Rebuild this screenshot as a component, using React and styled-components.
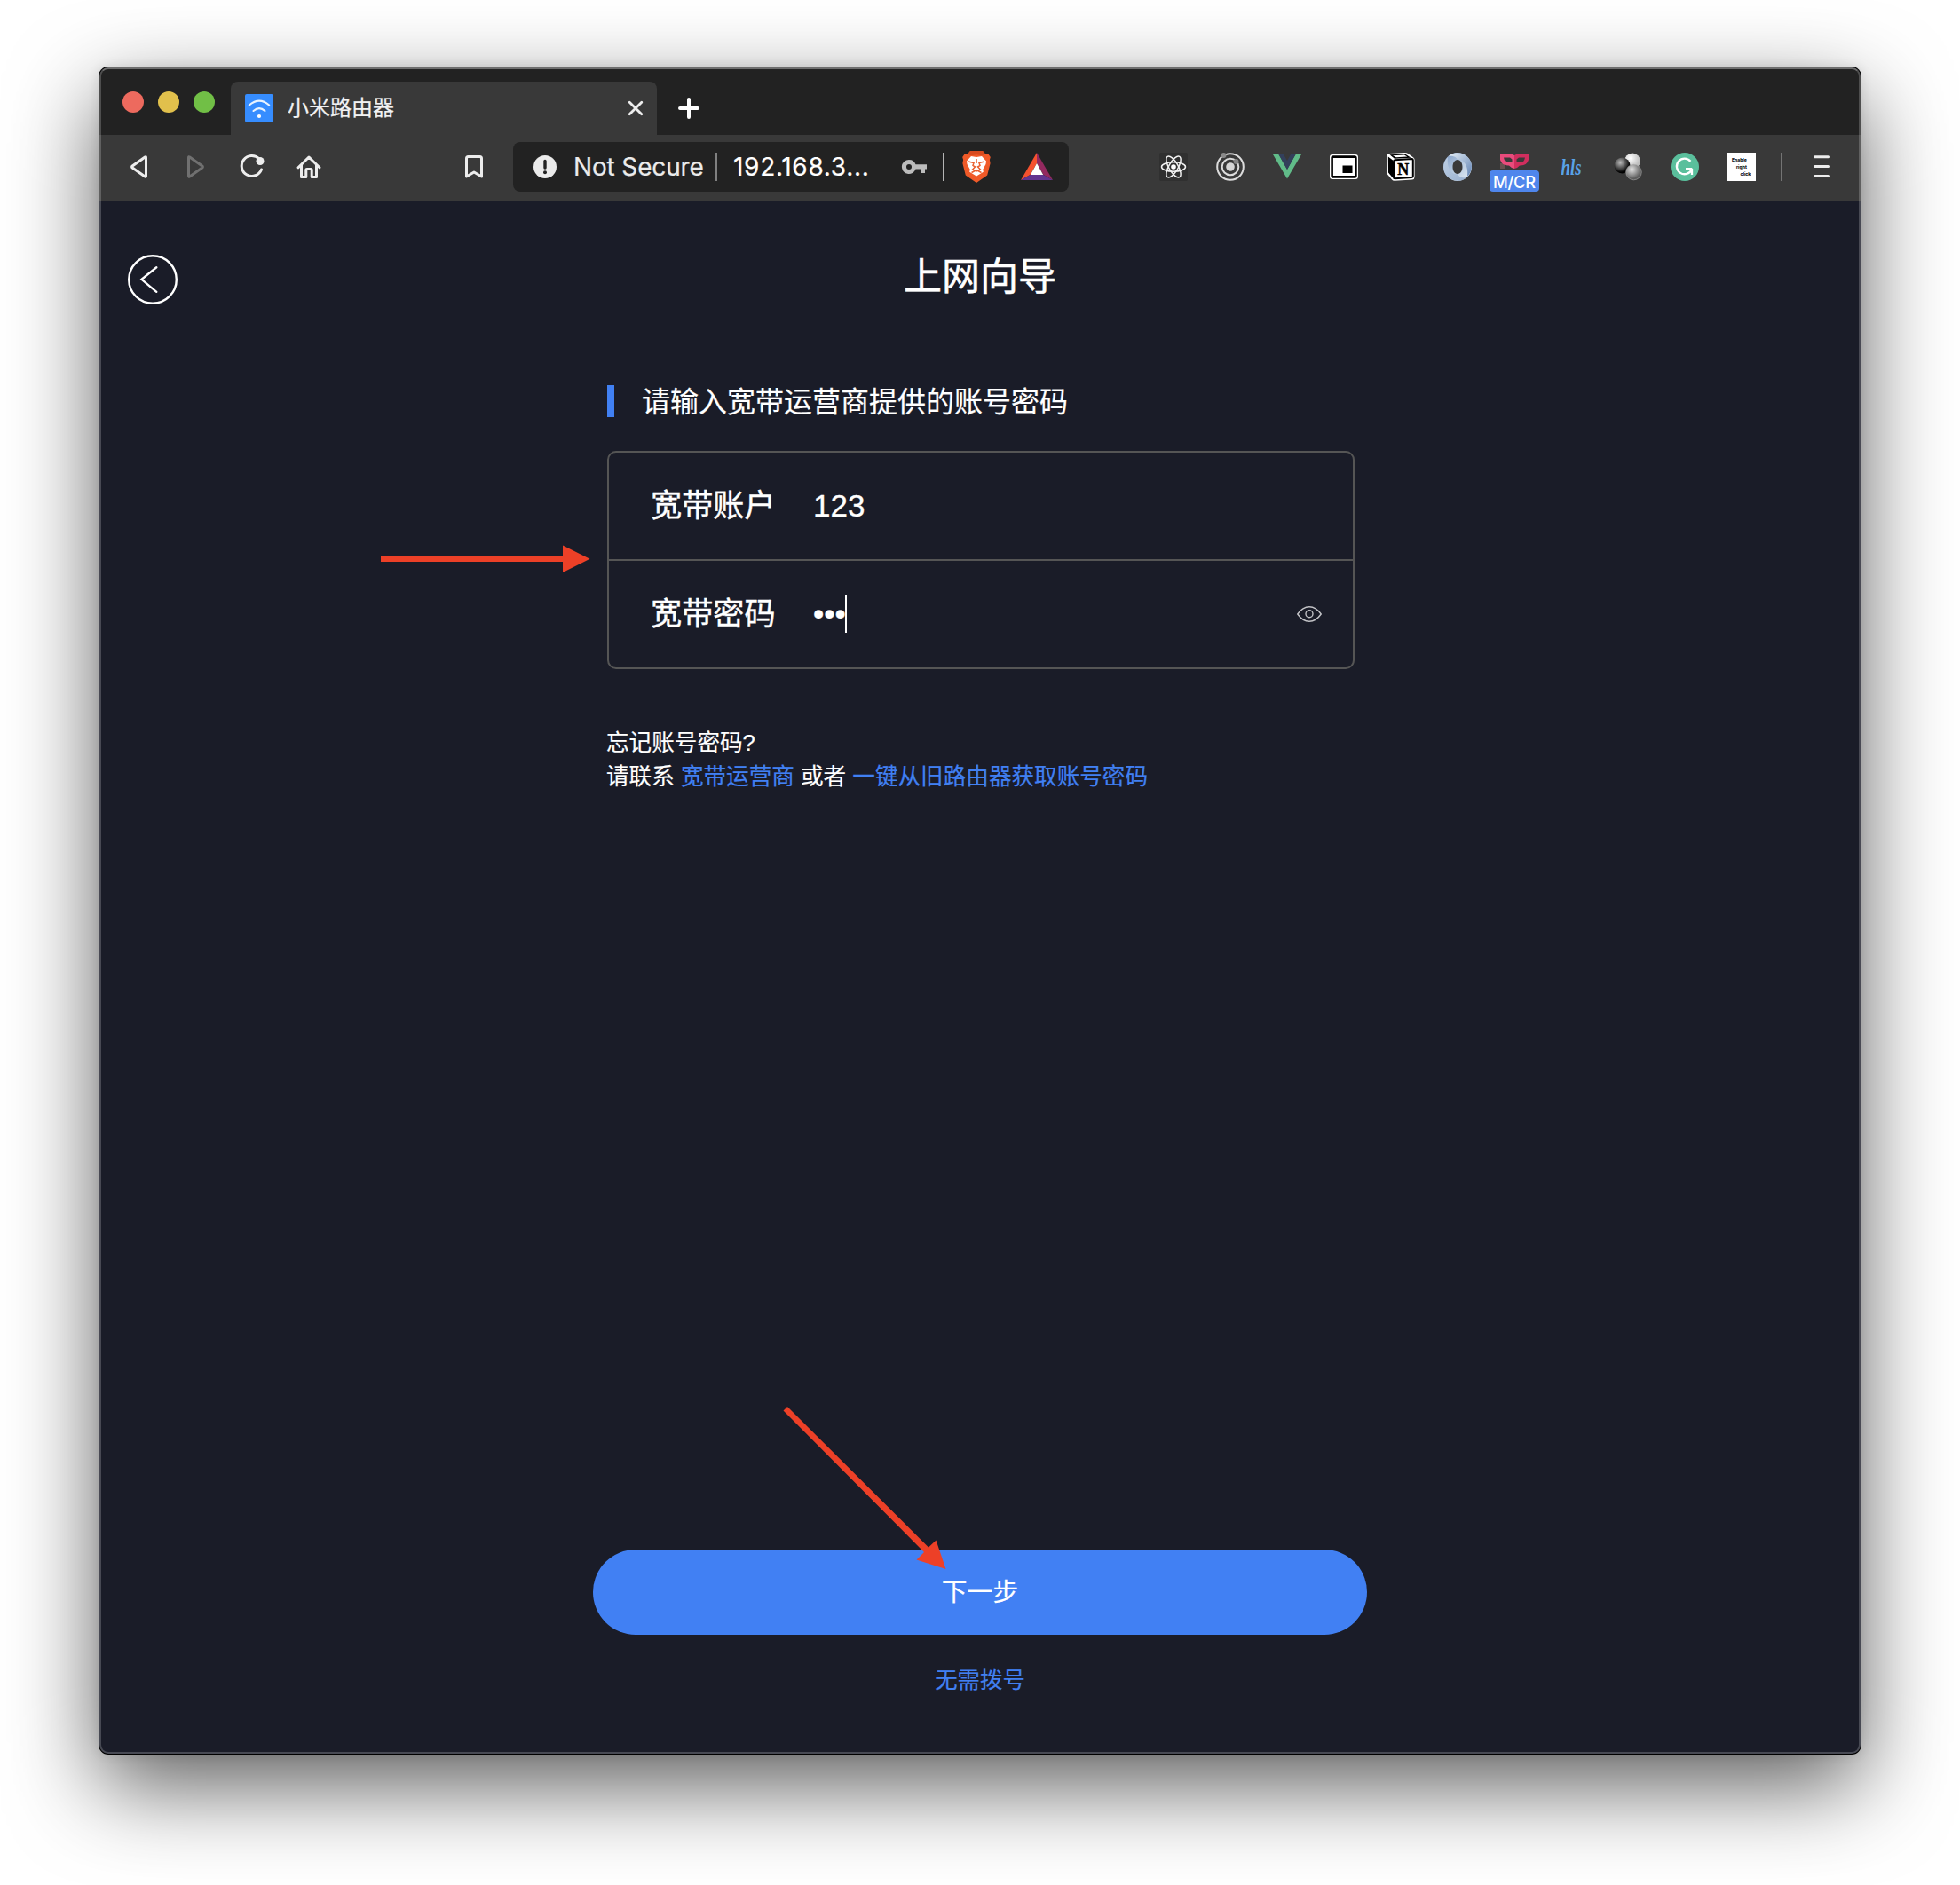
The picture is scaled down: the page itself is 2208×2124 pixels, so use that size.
import React from "react";
import styled, { createGlobalStyle } from "styled-components";

const Global = createGlobalStyle`
  * { box-sizing: border-box; }
  body { margin: 0; background: #fff; }
`;

const cjk = `"Liberation Sans", "Noto Sans CJK SC", sans-serif`;
const ui = `Inter, "Noto Sans CJK SC", sans-serif`;

const Desktop = styled.div`
  width: 2208px;
  height: 2124px;
  padding: 76px 112px 148px;
  overflow: hidden;
  position: relative;
  background: #fff;
`;

const BrowserWindow = styled.div`
  position: relative;
  display: flex;
  flex-direction: column;
  height: 1900px;
  border-radius: 10px;
  background: #1a1c28;
  box-shadow: 0 0 0 1px #000, 0 36px 100px rgba(0, 0, 0, 0.64), 0 0 14px rgba(0, 0, 0, 0.12);
  &::after {
    content: "";
    position: absolute;
    inset: 0;
    border-radius: 10px;
    border: 2px solid rgba(255, 255, 255, 0.2);
    border-top-color: rgba(255, 255, 255, 0.34);
    pointer-events: none;
  }
`;

const TabStrip = styled.div`
  display: flex;
  align-items: flex-end;
  height: 76px;
  background: #222;
  border-radius: 10px 10px 0 0;
`;

const TrafficLights = styled.div`
  display: flex;
  gap: 16px;
  width: 148px;
  padding: 0 18px 25px 26px;
`;

const Light = styled.span`
  width: 24px;
  height: 24px;
  flex: none;
  border-radius: 50%;
  background: ${(p) => p.$color};
`;

const Tab = styled.div`
  display: flex;
  align-items: center;
  width: 480px;
  height: 60px;
  padding: 0 16px;
  border-radius: 8px 8px 0 0;
  background: #393939;
`;

const TabTitle = styled.span`
  flex: 1;
  margin-left: 16px;
  font: 400 24px/32px ${ui};
  color: #f2f2f2;
  -webkit-text-stroke: 0.2px currentColor;
`;

const NewTab = styled.div`
  display: flex;
  align-items: center;
  height: 60px;
  padding-left: 24px;
`;

const Toolbar = styled.div`
  display: flex;
  align-items: center;
  height: 74px;
  padding: 0 28px 2px;
  background: #393939;
`;

const IconGroup = styled.div`
  display: flex;
  align-items: center;
  gap: 32px;
  margin-left: ${(p) => p.$left || 0}px;
`;

const Slot = styled.div`
  position: relative;
  display: flex;
  width: 32px;
  height: 32px;
  flex: none;
`;

const Icon = styled.svg`
  display: block;
  flex: none;
  margin-left: ${(p) => p.$left || 0}px;
  overflow: visible;
`;

const Badge = styled.span`
  position: absolute;
  left: -12px;
  top: 20px;
  width: 56px;
  height: 24px;
  border-radius: 4px;
  background: #4f86ec;
  color: #fff;
  font: 500 18.3px/27px ${ui};
  letter-spacing: -0.2px;
  text-align: center;
`;

const AddressBar = styled.div`
  display: flex;
  align-items: center;
  width: 626px;
  height: 56px;
  margin-left: 28px;
  padding-left: 22px;
  border-radius: 8px;
  background: #222;
`;

const AddressText = styled.span`
  width: ${(p) => p.$width}px;
  margin-left: ${(p) => p.$left}px;
  font: 400 28px/36px ${ui};
  letter-spacing: ${(p) => p.$spacing || 0}px;
  color: ${(p) => p.$color};
  white-space: nowrap;
  -webkit-text-stroke: 0.2px currentColor;
`;

const Divider = styled.span`
  width: 2px;
  height: 32px;
  flex: none;
  margin-left: ${(p) => p.$left || 0}px;
  background: ${(p) => p.$color};
`;

const Page = styled.main`
  flex: 1;
  display: flex;
  flex-direction: column;
  align-items: center;
  font-family: ${cjk};
  color: #fff;
  -webkit-text-stroke: 0.2px currentColor;
`;

const Header = styled.header`
  display: flex;
  justify-content: space-between;
  width: 100%;
  padding: 54px 32px 0;
`;

const BackButton = styled.button`
  width: 56px;
  height: 56px;
  margin-top: 7px;
  padding: 0;
  border: 0;
  background: none;
`;

const Title = styled.h1`
  margin: 2px 0 0;
  font-size: 43px;
  font-weight: 400;
  line-height: 60px;
  -webkit-text-stroke: 0.5px currentColor;
`;

const Balance = styled.span`
  width: 56px;
`;

const Form = styled.section`
  width: 842px;
  margin: 91px 0 0 2px;
`;

const Prompt = styled.h2`
  display: flex;
  align-items: center;
  height: 36px;
  margin: 0;
  padding: 2px 0 0 31px;
  border-left: 8px solid #4180f3;
  font-size: 32px;
  font-weight: 400;
  line-height: 36px;
`;

const Fields = styled.div`
  margin-top: 38px;
  height: 246px;
  border: 2px solid #555;
  border-radius: 10px;
`;

const Field = styled.label`
  display: flex;
  align-items: center;
  height: ${(p) => (p.$divided ? 122 : 120)}px;
  padding: 0 35px 0 47px;
  border-bottom: ${(p) => (p.$divided ? "2px solid #555" : "0")};
  font-size: 35.2px;
  line-height: 42px;
`;

const FieldName = styled.span`
  width: 183px;
  -webkit-text-stroke: 0.4px currentColor;
`;

const Value = styled.span`
  display: flex;
  flex: 1;
  margin-top: -1px;
  font-size: 35px;
  -webkit-text-stroke: 0.3px currentColor;
`;

const Caret = styled.span`
  width: 2px;
  height: 42px;
  margin-left: -1px;
  background: #fff;
`;

const Help = styled.p`
  margin: 64px 0 0 -1px;
  font-size: 25.6px;
  line-height: 38px;
  white-space: nowrap;
`;

const Link = styled.a`
  color: #4180f3;
`;

const Actions = styled.footer`
  display: flex;
  flex-direction: column;
  align-items: center;
  margin-top: auto;
  padding-bottom: 64px;
`;

const NextButton = styled.button`
  width: 872px;
  height: 96px;
  padding: 0;
  border: 0;
  border-radius: 48px;
  background: #4180f3;
  color: #fff;
  font: 400 28.8px/40px ${cjk};
  -webkit-text-stroke: 0.2px currentColor;
`;

const Skip = styled(Link)`
  margin-top: 32px;
  font-size: 25.4px;
  line-height: 38px;
`;

const Pointers = styled.svg`
  position: absolute;
  left: 0;
  top: 0;
  pointer-events: none;
`;

const line = {
  fill: "none",
  stroke: "#ededed",
  strokeWidth: 3,
  strokeLinecap: "round",
  strokeLinejoin: "round",
};

const Glyph = ({ children }) => (
  <Slot>
    <Icon width="32" height="32" viewBox="0 0 32 32">{children}</Icon>
  </Slot>
);

const Favicon = () => (
  <Icon width="32" height="32" viewBox="0 0 32 32">
    <rect width="32" height="32" rx="2" fill="#368dff" />
    <path d="M4.800 12.500Q16 2.800 27.200 12.500M9.500 19Q16 13.400 22.500 19" fill="none" stroke="#e8f3ff" strokeWidth="2.100" strokeLinecap="round" />
    <circle cx="16" cy="25" r="2.100" fill="#fff" />
  </Icon>
);

const BraveIcon = () => (
  <Icon width="32" height="36" viewBox="0 0 32 36" $left={20}>
    <path d="M9 0h14l3 3.400 3-.4 2.800 4-.9 3 .7 4-3.400 13.500L16 36 3.800 27.500 .4 14l.7-4-.9-3L3 3l3 .4z" fill="#f05a28" />
    <path d="M9 0h14l3 3.400-3.500 1.800-6.500-1-6.500 1L6 3.400z" fill="#d84b1f" />
    <path d="M10 6l6 1 6-1 5 5.500-.5 3.500-3.200 5.800.5 3L16 28.500l-7.800-4.700.5-3L5.500 15 5 11.500z" fill="#fff" />
    <path d="M7 12l6 1.500-1 3 2.500 1.500-3 3 4.500 2 4.500-2-3-3 2.500-1.500-1-3 6-1.500M16 9v5M10.500 24.500L16 21.500l5.500 3" fill="none" stroke="#e9602f" strokeWidth="1.500" />
  </Icon>
);

const BatIcon = () => (
  <Icon width="36" height="32" viewBox="0 0 36 32" $left={34}>
    <path d="M18 0v12L10.500 25 0 31z" fill="#f5512f" />
    <path d="M18 0v12l7.500 13L36 31z" fill="#94295f" />
    <path d="M0 31l10.500-6h15L36 31z" fill="#62348f" />
    <path d="M18 12l7.200 13H10.800z" fill="#fff" />
  </Icon>
);

const ReactIcon = () => (
  <Glyph>
    <rect width="32" height="32" rx="2" fill="#303030" />
    <g fill="none" stroke="#f2f2f2" strokeWidth="1.500">
      {[0, 60, 120].map((a) => (
        <ellipse key={a} cx="16" cy="16" rx="13.500" ry="5.200" transform={`rotate(${a} 16 16)`} />
      ))}
    </g>
    <circle cx="16" cy="16" r="2.800" fill="#fff" />
  </Glyph>
);

const OrbitIcon = () => (
  <Glyph>
    <g fill="none" stroke="#dcdcdc" strokeWidth="2">
      <circle cx="16" cy="16" r="14.800" />
      <circle cx="16" cy="16" r="9.300" />
    </g>
    <circle cx="16" cy="16" r="4.800" fill="#d6d6d6" />
    <circle cx="8.500" cy="3" r="3" fill="#8a8a8a" />
    <circle cx="22.500" cy="10" r="3" fill="#858585" />
  </Glyph>
);

const VueIcon = () => (
  <Glyph>
    <path d="M0 2h6.500L16 19l9.500-17H32L16 29.500z" fill="#61bc89" />
    <path d="M6.500 2h5.500l4 7 4-7h5.500L16 19z" fill="#33405b" />
  </Glyph>
);

const PipIcon = () => (
  <Glyph>
    <rect x="0" y="2" width="32" height="28" rx="3" fill="#fff" />
    <rect x="2.600" y="4.600" width="26.800" height="22.800" rx="1.500" fill="#fff" stroke="#000" strokeWidth="2.600" />
    <rect x="14.500" y="14.500" width="11" height="8.500" fill="#000" />
  </Glyph>
);

const NotionIcon = () => (
  <Glyph>
    <path d="M.5 3Q.5 1 3 .9L20.500 0Q23 0 24.500 1.200L30 5.200Q31.600 6.200 31.600 8v19.500Q31.500 30.200 29 30.400L9.500 31.700Q7 31.900 5.800 30.200L1 24.500Q0 23 0 21z" fill="#fff" />
    <path d="M1.800 4.500L7 8.500V28.500L2 22.500zM3.500 2.300L21 1.600l6.500 4.200-18.500 1z" fill="#000" />
    <path d="M7 3.200l13-.7 3.300 2-12.500.7z" fill="#fff" />
    <path d="M9.500 8.300L28.500 7q1.300 0 1.300 1.200v18.300q0 1.500-1.500 1.600L9.500 29.300q-1.500 0-1.500-1.500V9.800q0-1.400 1.500-1.500z" fill="#fff" stroke="#000" strokeWidth="2" />
    <text x="18.700" y="24.500" textAnchor="middle" fontFamily="Liberation Serif, serif" fontWeight="700" fontSize="18" fill="#000" stroke="#000" strokeWidth=".5">N</text>
  </Glyph>
);

const JsonIcon = () => (
  <Glyph>
    <defs>
      <linearGradient id="ringBase" x1="0" y1="0" x2="1" y2="1">
        <stop offset="0" stopColor="#7f9cc6" />
        <stop offset=".5" stopColor="#b5c9e0" />
        <stop offset="1" stopColor="#eaf1f7" />
      </linearGradient>
      <linearGradient id="ringTop" x1="0" y1="0" x2="1" y2="1">
        <stop offset="0" stopColor="#eaf2f8" />
        <stop offset="1" stopColor="#5f82b4" />
      </linearGradient>
    </defs>
    <path fillRule="evenodd" d="M16 0a16 16 0 1 1 0 32 16 16 0 0 1 0-32zM16 8c-3.500 0-5.500 4-5.500 8s2 8 5.500 8 5.500-4 5.500-8-2-8-5.500-8z" fill="url(#ringBase)" />
    <path d="M14 .2C22-.5 31.500 5 32 15c0 5-2 9-5 12 1-8-1-14-5-17.500C20 8 18 7.500 16 8c-1-3.500-6-5-10.500-4Q9.500 .6 14 .2z" fill="url(#ringTop)" />
    <path d="M18 31.800C10 32.500.5 27 0 17c0-5 2-9 5-12-1 8 1 14 5 17.500 2 1.500 4 2 6 1.500 1 3.500 6 5 10.500 4q-4 3.400-8.500 3.800z" fill="url(#ringTop)" opacity=".55" />
  </Glyph>
);

const MaskIcon = () => (
  <Slot>
    <Icon width="32" height="32" viewBox="0 0 32 32">
      <rect x="0" y="12" width="5" height="6" fill="#66504f" />
      <path d="M0 1h12l4 2v15q-4-1-6-3.500Q2 15 0 8z" fill="#e94b7c" />
      <path d="M32 1H20l-4 2v15q4-1 6-3.500Q30 15 32 8z" fill="#d02e5e" />
      <path d="M4 5.500h7l2.500 2v3.500H9Q5 11 4 5.500zM28 5.500h-7l-2.500 2v3.500H23Q27 11 28 5.500z" fill="#393939" />
    </Icon>
    <Badge>M/CR</Badge>
  </Slot>
);

const HlsIcon = () => (
  <Glyph>
    <text x="16" y="25" textAnchor="middle" textLength="23" lengthAdjust="spacingAndGlyphs" fontFamily="Liberation Serif, serif" fontStyle="italic" fontWeight="700" fontSize="25" fill="#5aa3e8">hls</text>
  </Glyph>
);

const BallsIcon = () => (
  <Glyph>
    <defs>
      {[["ballW", "#fff", "#bdbdbd"], ["ballK", "#bbb", "#000"], ["ballG", "#e4e4e4", "#5c5c5c"]].map(([id, a, b]) => (
        <radialGradient key={id} id={id} cx=".38" cy=".32" r=".6">
          <stop offset="0" stopColor={a} />
          <stop offset="1" stopColor={b} />
        </radialGradient>
      ))}
    </defs>
    <circle cx="21" cy="9.500" r="9" fill="url(#ballW)" />
    <circle cx="9.500" cy="14.500" r="9" fill="url(#ballK)" />
    <circle cx="22.500" cy="22" r="8.800" fill="url(#ballG)" stroke="#aaa" strokeWidth=".6" />
  </Glyph>
);

const GrammarlyIcon = () => (
  <Glyph>
    <circle cx="16" cy="16" r="16" fill="#5abf9c" />
    <path d="M22.500 9.800A8.800 8.800 0 1 0 23.800 19M17 18.200h7.300M24 18v7" fill="none" stroke="#fff" strokeWidth="2.300" />
  </Glyph>
);

const RightClickIcon = () => (
  <Glyph>
    <rect width="32" height="32" fill="#fff" />
    <g fontFamily="Inter, sans-serif" fontWeight="800" fontSize="5" fill="#111">
      <text x="5" y="10">Enable</text>
      <text x="10" y="18.300">right</text>
      <text x="14.500" y="26">click</text>
    </g>
  </Glyph>
);

export default function App() {
  return (
    <Desktop>
      <Global />
      <BrowserWindow>
        <TabStrip>
          <TrafficLights>
            <Light $color="#ed6a5e" />
            <Light $color="#e1c04c" />
            <Light $color="#71bf46" />
          </TrafficLights>
          <Tab>
            <Favicon />
            <TabTitle>小米路由器</TabTitle>
            <Icon width="16" height="16" viewBox="0 0 16 16">
              <path d="M1.200 1.200l13.600 13.600M14.800 1.200L1.200 14.800" {...line} strokeWidth={2.8} />
            </Icon>
          </Tab>
          <NewTab>
            <Icon width="24" height="24" viewBox="0 0 24 24">
              <path d="M12 2v20M2 12h20" {...line} stroke="#fff" strokeWidth={4} />
            </Icon>
          </NewTab>
        </TabStrip>

        <Toolbar>
          <IconGroup>
            <Glyph><path d="M24.500 5.500v21q0 1.300-1.200.500L9.200 17q-1.200-1 0-2L23.300 5q1.200-.8 1.200.5z" {...line} /></Glyph>
            <Glyph><path d="M8.500 5.500v21q0 1.300 1.200.500L23.800 17q1.200-1 0-2L9.700 5Q8.500 4.200 8.500 5.500z" {...line} stroke="#707070" /></Glyph>
            <Glyph>
              <path d="M24 7A11.500 11.500 0 1 0 26.500 19" {...line} />
              <circle cx="25" cy="9.500" r="4.500" fill="#ededed" />
            </Glyph>
            <Glyph><path d="M4 16.800L16 5l12 11.800M7.500 14v13.500h5.300v-8q0-1 1-1h4.400q1 0 1 1v8h5.300V14" {...line} /></Glyph>
          </IconGroup>
          <IconGroup $left={154}>
            <Glyph><path d="M7.500 27V6.500q0-2 2-2h13q2 0 2 2V27L16 22z" {...line} /></Glyph>
          </IconGroup>
          <AddressBar>
            <Icon width="28" height="28" viewBox="0 0 28 28">
              <circle cx="14" cy="14" r="13" fill="#ebebeb" />
              <path d="M14 7.500v7.500" stroke="#222" strokeWidth="3.400" strokeLinecap="round" />
              <circle cx="14" cy="20.200" r="2" fill="#222" />
            </Icon>
            <AddressText $left={18} $width={160} $spacing={-0.15} $color="#ebebeb">Not Secure</AddressText>
            <Divider $color="#808080" />
            <AddressText $left={18} $width={190} $spacing={0.7} $color="#fff">192.168.3...</AddressText>
            <Icon width="28" height="16" viewBox="0 0 28 16">
              <path d="M8 0a8 8 0 0 1 7.500 5.300H28v5.200h-2V15h-4.500v-4.500h-6A8 8 0 1 1 8 0zM8 5a3 3 0 1 0 0 6 3 3 0 0 0 0-6z" fill="#bcbcbc" />
            </Icon>
            <Divider $left={18} $color="#b4b4b4" />
            <BraveIcon />
            <BatIcon />
          </AddressBar>
          <IconGroup $left={102}>
            <ReactIcon />
            <OrbitIcon />
            <VueIcon />
            <PipIcon />
            <NotionIcon />
            <JsonIcon />
            <MaskIcon />
            <HlsIcon />
            <BallsIcon />
            <GrammarlyIcon />
            <RightClickIcon />
          </IconGroup>
          <Divider $left={28} $color="#747474" />
          <IconGroup $left={28}>
            <Glyph><path d="M8.500 4.700h15M8.500 15.500h15M8.500 26.500h15" {...line} /></Glyph>
          </IconGroup>
        </Toolbar>

        <Page>
          <Header>
            <BackButton aria-label="返回">
              <Icon width="56" height="56" viewBox="0 0 56 56" fill="none" stroke="#fff" strokeWidth="2.400" strokeLinecap="round">
                <circle cx="28" cy="28" r="26.800" />
                <path d="M32.300 14.300L15.500 27.800l16.800 14" />
              </Icon>
            </BackButton>
            <Title>上网向导</Title>
            <Balance />
          </Header>

          <Form>
            <Prompt>请输入宽带运营商提供的账号密码</Prompt>
            <Fields>
              <Field $divided>
                <FieldName>宽带账户</FieldName>
                <Value>123</Value>
              </Field>
              <Field>
                <FieldName>宽带密码</FieldName>
                <Value>•••<Caret /></Value>
                <Icon width="28" height="18" viewBox="0 0 28 18" fill="none" stroke="#c2c2c6" strokeWidth="1.400">
                  <path d="M.8 9Q6.500.8 14 .8T27.200 9Q21.500 17.200 14 17.200T.8 9z" />
                  <circle cx="14" cy="8.800" r="4" />
                </Icon>
              </Field>
            </Fields>
            <Help>
              忘记账号密码?
              <br />
              请联系 <Link>宽带运营商</Link> 或者 <Link>一键从旧路由器获取账号密码</Link>
            </Help>
          </Form>

          <Actions>
            <NextButton>下一步</NextButton>
            <Skip>无需拨号</Skip>
          </Actions>
        </Page>
      </BrowserWindow>

      <Pointers width="2208" height="2124" viewBox="0 0 2208 2124" fill="#ed4027">
        <path d="M429 626.800h205v-12.300L664.500 629.800 634 645v-12H429z" />
        <path d="M887 1585L1046 1743.500 1054.500 1735.500 1065.500 1768 1032.500 1757.500 1041 1749 882.500 1589.500z" />
      </Pointers>
    </Desktop>
  );
}
